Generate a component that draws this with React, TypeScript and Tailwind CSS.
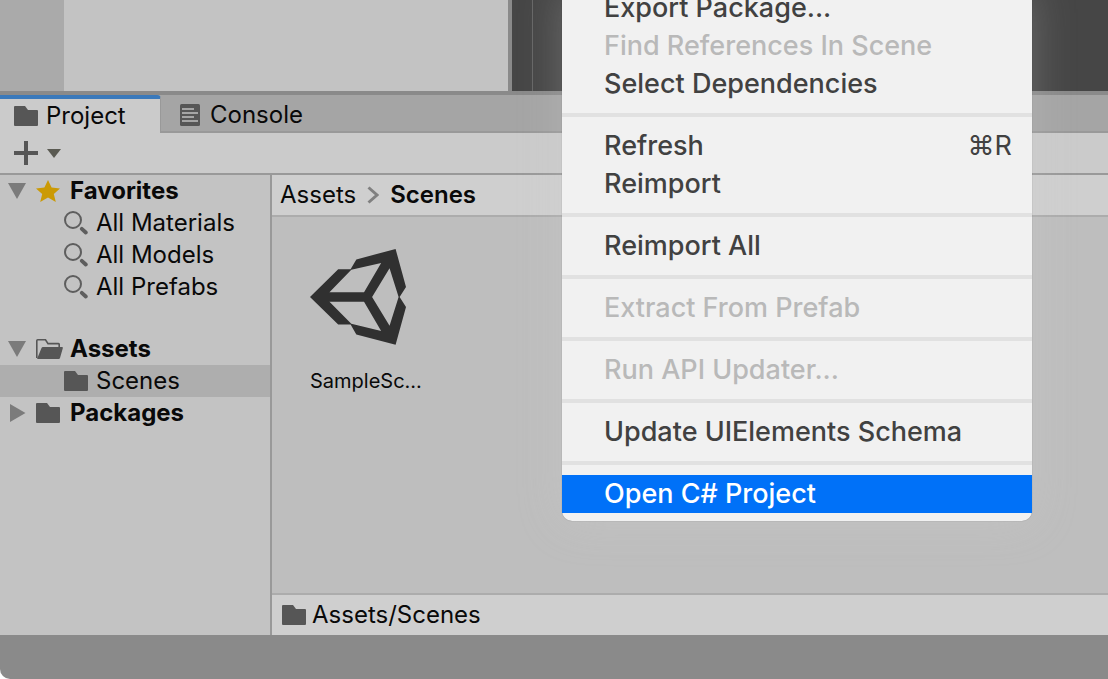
import { Fragment } from "react"
import clsx from "clsx"

type MenuItem = { label: string; shortcut?: string; disabled?: boolean; active?: boolean }

const MENU_GROUPS: MenuItem[][] = [
  [
    { label: "Export Package..." },
    { label: "Find References In Scene", disabled: true },
    { label: "Select Dependencies" },
  ],
  [{ label: "Refresh", shortcut: "⌘R" }, { label: "Reimport" }],
  [{ label: "Reimport All" }],
  [{ label: "Extract From Prefab", disabled: true }],
  [{ label: "Run API Updater...", disabled: true }],
  [{ label: "Update UIElements Schema" }],
  [{ label: "Open C# Project", active: true }],
]

function FolderIcon() {
  return (
    <svg viewBox="0 0 24 20" className="h-5 w-6 shrink-0" fill="#565656">
      <path d="M1 0h10l3 4h9a1 1 0 0 1 1 1v14a1 1 0 0 1-1 1H1a1 1 0 0 1-1-1V1a1 1 0 0 1 1-1z" />
    </svg>
  )
}

function FolderOpenIcon() {
  return (
    <svg viewBox="0 0 27 20" className="h-5 w-[27px] shrink-0">
      <path
        d="M.8 19V1.700Q.8 .8 1.700 .8H9.500L12 4.600H22.500Q23.200 4.600 23.200 5.300V8"
        fill="none"
        stroke="#565656"
        strokeWidth="1.600"
      />
      <path d="M7 8h19q1.200 0 .8 1.200L24 19q-.3 1-1.300 1H1.500Q1 20 1.400 19L5.500 9q.4-1 1.500-1z" fill="#565656" />
    </svg>
  )
}

function SearchIcon() {
  return (
    <svg viewBox="0 0 24 24" className="size-6 shrink-0" fill="none" stroke="#5e5e5e">
      <circle cx="9" cy="9" r="8" strokeWidth="2" />
      <path d="M17.800 17.800l4 3.700" strokeWidth="3.800" strokeLinecap="round" />
    </svg>
  )
}

function StarIcon() {
  return (
    <svg viewBox="0 0 24 22" className="h-[22px] w-6 shrink-0" fill="#cb9a05">
      <path d="M12 0l3.600 7.500 8.400.9-6.200 5.500 2 8.100-7.800-4.500L4.200 22l2-8.100L0 8.400l8.400-.9z" />
    </svg>
  )
}

function ConsoleIcon() {
  return (
    <svg viewBox="0 0 20 22" className="h-[22px] w-5 shrink-0">
      <rect width="20" height="22" rx="1.500" fill="#565656" />
      <path d="M2 5h12M2 9h16M2 13h12M2 17h16" stroke="#a5a5a5" strokeWidth="2" />
    </svg>
  )
}

function Triangle({ open }: { open: boolean }) {
  return (
    <svg viewBox="0 0 18 18" className="size-[18px] shrink-0" fill="#7b7b7b">
      <path d={open ? "M0 1h18L9 17z" : "M2 0l15.500 9L2 18z"} />
    </svg>
  )
}

function UnityLogo() {
  return (
    <svg viewBox="121 237 286 286" className="size-24" fill="#303030">
      <path
        fillRule="evenodd"
        d="M121 380L205 297H242L259 268L376 237L407 350L388 380L407 410L376 522L259 492L242 462H205Z
           M179 366H282L333 279L244 299Z
           M179 394L244 460L333 481L282 394Z
           M306 380L358 466L385 380L358 294Z"
      />
    </svg>
  )
}

function TopPanels() {
  return (
    <div className="flex h-[95px] shrink-0 border-b-4 border-[#8a8a8a]">
      <div className="w-16 bg-[#aaaaaa]" />
      <div className="w-[448px] border-r-4 border-[#8a8a8a] bg-[#c3c3c3]" />
      <div className="w-5 bg-[#464646]" />
      <div className="flex-1 border-l border-[#676767] bg-[#464646]" />
    </div>
  )
}

function Tabs() {
  return (
    <div role="tablist" className="flex h-[38px] shrink-0 bg-[#a5a5a5]">
      <button
        role="tab"
        aria-selected="true"
        className="flex w-[161px] items-center gap-2 rounded-tr-sm border-t-4 border-r border-t-[#3a79bb] border-r-[#999999] bg-[#cbcbcb] pl-3.5"
      >
        <FolderIcon />
        Project
      </button>
      <button
        role="tab"
        aria-selected="false"
        className="flex flex-1 items-center gap-2.5 border-b-2 border-[#999999] pt-1 pl-[19px]"
      >
        <ConsoleIcon />
        Console
      </button>
    </div>
  )
}

function Toolbar() {
  return (
    <div className="flex h-[42px] shrink-0 items-center border-b-2 border-[#999999] bg-[#cbcbcb] pl-3.5">
      <button aria-label="Create" className="flex items-center gap-[9px]">
        <svg viewBox="0 0 24 24" className="size-6" stroke="#565656" strokeWidth="4">
          <path d="M12 0v24M0 12h24" />
        </svg>
        <svg viewBox="0 0 14 9" className="h-[9px] w-3.5" fill="#5a5a52">
          <path d="M0 0h14L7 9z" />
        </svg>
      </button>
    </div>
  )
}

const FAVORITES = ["All Materials", "All Models", "All Prefabs"]

function Sidebar() {
  return (
    <nav className="w-[272px] shrink-0 border-r-2 border-[#999999] bg-[#c3c3c3]">
      <button className="flex h-8 w-full items-center pl-2 font-bold">
        <Triangle open />
        <span className="mr-2.5 ml-2.5">
          <StarIcon />
        </span>
        Favorites
      </button>
      {FAVORITES.map((name) => (
        <button key={name} className="flex h-8 w-full items-center gap-2 pl-16">
          <SearchIcon />
          {name}
        </button>
      ))}
      <button className="mt-[30px] flex h-8 w-full items-center pl-2 font-bold">
        <Triangle open />
        <span className="mr-[7px] ml-2.5">
          <FolderOpenIcon />
        </span>
        Assets
      </button>
      <button className="flex h-8 w-full items-center gap-2 bg-[#aeaeae] pl-16">
        <FolderIcon />
        Scenes
      </button>
      <button className="flex h-8 w-full items-center pl-2 font-bold">
        <Triangle open={false} />
        <span className="mr-2.5 ml-2.5">
          <FolderIcon />
        </span>
        Packages
      </button>
    </nav>
  )
}

function Browser() {
  return (
    <section className="flex flex-1 flex-col bg-[#bebebe]">
      <div className="flex h-[42px] items-center border-b-2 border-[#acacac] bg-[#cfcfcf] pl-2">
        <a href="#assets">Assets</a>
        <svg viewBox="0 0 12 18" className="mx-[11px] h-[18px] w-3" fill="none" stroke="#808080" strokeWidth="3">
          <path d="M1.500 1.500L10 9l-8.500 7.500" />
        </svg>
        <a href="#scenes" className="font-semibold">
          Scenes
        </a>
      </div>
      <div className="flex-1 px-[38px] pt-8">
        <button className="flex flex-col items-start gap-[22px] text-xl">
          <UnityLogo />
          SampleSc...
        </button>
      </div>
      <div className="flex h-[42px] items-center gap-1.5 border-t-2 border-[#acacac] bg-[#cfcfcf] pl-2.5">
        <FolderIcon />
        Assets/Scenes
      </div>
    </section>
  )
}

function ContextMenu() {
  return (
    <div
      role="menu"
      className="absolute -top-[11px] left-[562px] w-[470px] rounded-b-[10px] bg-[#f1f1f1] pb-2 text-[27px] leading-9 font-medium text-[#414141] shadow-[0_0_1px_rgba(0,0,0,0.4),0_0_44px_rgba(210,210,210,0.28)]"
    >
      {MENU_GROUPS.map((group, i) => (
        <Fragment key={i}>
          {i > 0 && <hr className="my-2.5 border-t-4 border-[#e1e1e1]" />}
          {group.map((item) => (
            <button
              key={item.label}
              role="menuitem"
              disabled={item.disabled}
              className={clsx(
                "flex h-[38px] w-full items-center justify-between pr-5 pl-[42px]",
                item.disabled && "text-[#b9b9b9]",
                item.active && "bg-[#0071f8] text-white",
              )}
            >
              {item.label}
              {item.shortcut && <kbd className="font-[Inter,sans-serif] font-normal">{item.shortcut}</kbd>}
            </button>
          ))}
        </Fragment>
      ))}
    </div>
  )
}

export default function App() {
  return (
    <div className="min-h-screen bg-white">
      <div className="relative flex min-h-screen flex-col overflow-hidden rounded-bl-[10px] bg-[#8a8a8a] font-[Inter,sans-serif] text-2xl leading-8 text-[#090909]">
        <TopPanels />
        <Tabs />
        <Toolbar />
        <div className="flex flex-1">
          <Sidebar />
          <Browser />
        </div>
        <div className="h-11 shrink-0" />
        <ContextMenu />
      </div>
    </div>
  )
}
